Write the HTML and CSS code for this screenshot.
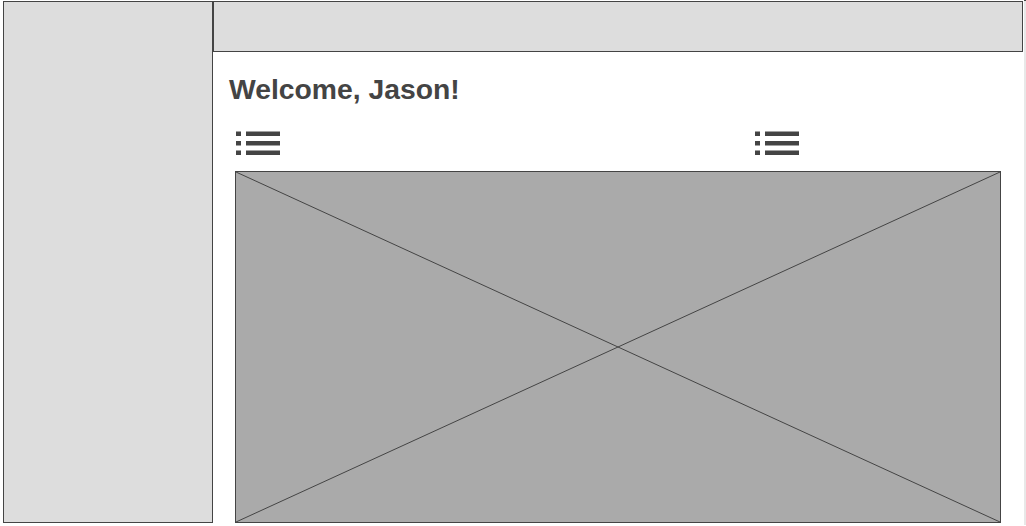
FILE: index.html
```html
<!DOCTYPE html>
<html lang="en">
<head>
<meta charset="utf-8">
<title>Dashboard</title>
<link rel="stylesheet" href="styles.css">
</head>
<body>
<div class="frame">
  <aside class="sidebar"></aside>
  <div class="main">
    <header class="topbar"></header>
    <section class="content">
      <h1 class="title">Welcome, Jason!</h1>
      <div class="widgets">
        <div class="widget-head">
          <svg class="list-icon" width="44" height="25" viewBox="0 0 44 25" aria-hidden="true">
            <rect x="0" y="0.5" width="5" height="4.5"/>
            <rect x="10" y="0.5" width="34" height="4.5"/>
            <rect x="0" y="10" width="5" height="4.5"/>
            <rect x="10" y="10" width="34" height="4.5"/>
            <rect x="0" y="19.5" width="5" height="4.5"/>
            <rect x="10" y="19.5" width="34" height="4.5"/>
          </svg>
        </div>
        <div class="widget-head">
          <svg class="list-icon" width="44" height="25" viewBox="0 0 44 25" aria-hidden="true">
            <rect x="0" y="0.5" width="5" height="4.5"/>
            <rect x="10" y="0.5" width="34" height="4.5"/>
            <rect x="0" y="10" width="5" height="4.5"/>
            <rect x="10" y="10" width="34" height="4.5"/>
            <rect x="0" y="19.5" width="5" height="4.5"/>
            <rect x="10" y="19.5" width="34" height="4.5"/>
          </svg>
        </div>
      </div>
      <div class="placeholder">
        <svg class="cross" viewBox="0 0 100 100" preserveAspectRatio="none" aria-hidden="true">
          <line x1="0" y1="0" x2="100" y2="100" vector-effect="non-scaling-stroke"/>
          <line x1="100" y1="0" x2="0" y2="100" vector-effect="non-scaling-stroke"/>
        </svg>
      </div>
    </section>
  </div>
  <div class="edge"></div>
</div>
</body>
</html>
```

FILE: styles.css
```css
html, body {
  margin: 0;
  padding: 0;
  background: #ffffff;
}

body {
  font-family: "Liberation Sans", Arial, sans-serif;
  color: #444444;
  width: 1026px;
  height: 526px;
  overflow: hidden;
}

.frame {
  display: flex;
  height: 522px;
  padding: 1px 0 0 3px;
}

.sidebar {
  width: 210px;
  box-sizing: border-box;
  height: 522px;
  background: #dddddd;
  border: 1px solid #444444;
  flex: none;
}

.main {
  width: 810px;
  height: 522px;
  display: flex;
  flex-direction: column;
  flex: none;
}

.topbar {
  height: 51px;
  box-sizing: border-box;
  background: #dddddd;
  border: 1px solid #444444;
  flex: none;
}

.content {
  flex: 1;
  display: flex;
  flex-direction: column;
  padding: 0 22px 0 16px;
  min-height: 0;
}

.title {
  margin: 21px 0 0 0;
  font-size: 28.3px;
  line-height: 32px;
  font-weight: bold;
  color: #444444;
}

.widgets {
  display: grid;
  grid-template-columns: 519px 1fr;
  margin: 26px 0 0 7px;
  height: 25px;
}

.list-icon {
  display: block;
  fill: #444444;
}

.placeholder {
  flex: 1;
  margin: 15px 0 0 6px;
  background: #aaaaaa;
  border: 1px solid #444444;
  min-height: 0;
}

.cross {
  display: block;
  width: 100%;
  height: 100%;
}

.cross line {
  stroke: #444444;
  stroke-width: 1;
}

.edge {
  width: 3px;
  margin-left: 1px;
  height: 525px;
  margin-top: -1px;
  background: #e8e8e8;
  border-top: 1px solid #444444;
  box-sizing: border-box;
  flex: none;
}
```
